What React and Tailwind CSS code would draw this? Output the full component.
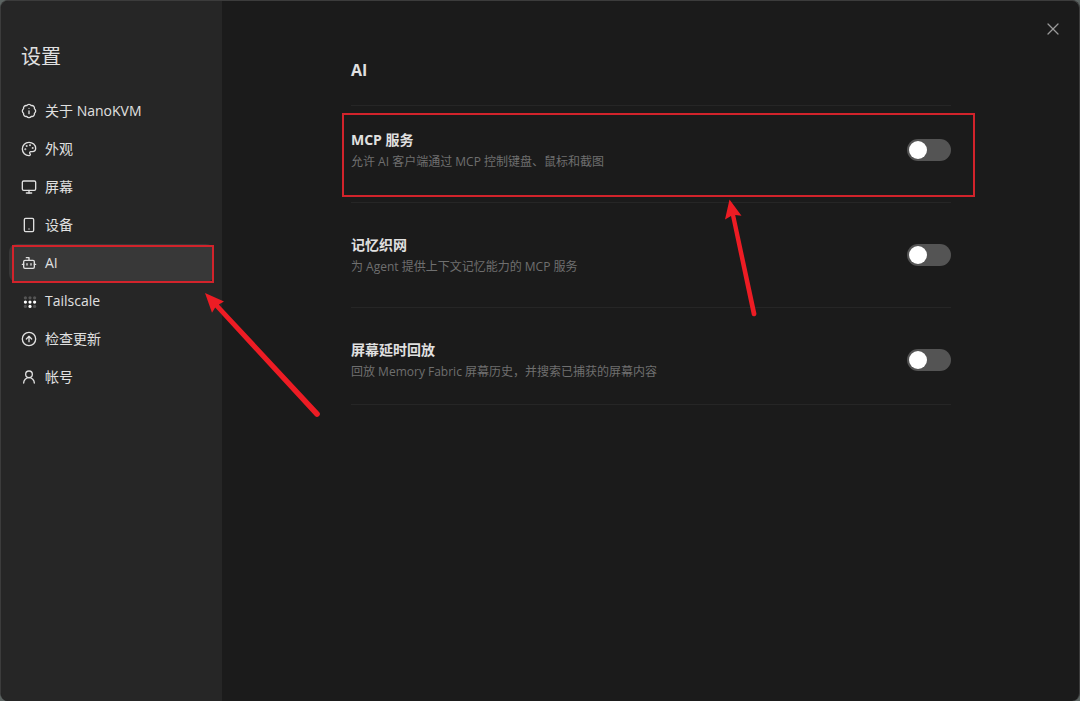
import React, { useState } from 'react';
import {
  BadgeInfo,
  Bot,
  CircleArrowUp,
  Monitor,
  Palette,
  Smartphone,
  UserRound,
  X,
} from 'lucide-react';

const TailscaleIcon = () => (
  <svg width="16" height="16" viewBox="0 0 16 16" fill="currentColor" aria-hidden="true">
    <g opacity="0.25">
      <circle cx="4.4" cy="4.8" r="1.6" />
      <circle cx="9" cy="4.8" r="1.6" />
      <circle cx="13.6" cy="4.8" r="1.6" />
      <circle cx="4.4" cy="13.4" r="1.6" />
      <circle cx="13.6" cy="13.4" r="1.6" />
    </g>
    <g fill="#fff">
      <circle cx="4.4" cy="9.1" r="1.6" />
      <circle cx="9" cy="9.1" r="1.6" />
      <circle cx="13.6" cy="9.1" r="1.6" />
      <circle cx="9" cy="13.4" r="1.6" />
    </g>
  </svg>
);

const tabs = [
  { id: 'about', label: '关于 NanoKVM', icon: <BadgeInfo size={16} /> },
  { id: 'appearance', label: '外观', icon: <Palette size={16} /> },
  { id: 'screen', label: '屏幕', icon: <Monitor size={16} /> },
  { id: 'device', label: '设备', icon: <Smartphone size={16} /> },
  { id: 'ai', label: 'AI', icon: <Bot size={16} />, marked: true },
  { id: 'tailscale', label: 'Tailscale', icon: <TailscaleIcon /> },
  { id: 'update', label: '检查更新', icon: <CircleArrowUp size={16} /> },
  { id: 'account', label: '帐号', icon: <UserRound size={16} /> },
];

const options = [
  {
    id: 'mcp',
    title: 'MCP 服务',
    description: '允许 AI 客户端通过 MCP 控制键盘、鼠标和截图',
    marked: true,
  },
  {
    id: 'memory',
    title: '记忆织网',
    description: '为 Agent 提供上下文记忆能力的 MCP 服务',
  },
  {
    id: 'replay',
    title: '屏幕延时回放',
    description: '回放 Memory Fabric 屏幕历史，并搜索已捕获的屏幕内容',
  },
];

// Red frame and arrow that point out the selected tab
const TabMark = () => (
  <>
    <span className="pointer-events-none absolute -bottom-px left-[3px] right-0 top-px border-2 border-[#d2232b]" />
    <svg
      className="pointer-events-none absolute left-[191px] top-11 z-10"
      width="124"
      height="132"
      viewBox="0 0 124 132"
      fill="#ed1c24"
      aria-hidden="true"
    >
      <path d="M5 5 L24 13.6 L18.8 16.4 L119 124 A2.8 2.8 0 0 1 115 128 L15.2 19.6 L12 24.7 Z" />
    </svg>
  </>
);

// Same for the MCP switch row
const OptionMark = () => (
  <>
    <span className="pointer-events-none absolute -left-[9px] -right-6 top-[7px] h-[84px] border-2 border-[#d2232b]" />
    <svg
      className="pointer-events-none absolute left-[369px] top-[89px] z-10"
      width="42"
      height="126"
      viewBox="0 0 42 126"
      fill="#ed1c24"
      aria-hidden="true"
    >
      <path d="M9.5 4.5 L21.5 20.7 L15.2 20 L36.4 118.6 A2.4 2.4 0 0 1 31.8 119.8 L11 21 L5 24.5 Z" />
    </svg>
  </>
);

const Sidebar = ({ current, onChange }) => (
  <aside className="w-[221px] shrink-0 bg-[#262626] px-2">
    <h1 className="px-3 pt-10 text-xl leading-8">设置</h1>
    <nav className="mt-[19px] flex flex-col">
      {tabs.map((tab) => (
        <button
          key={tab.id}
          type="button"
          onClick={() => onChange(tab.id)}
          className={`relative flex h-[38px] items-center gap-2 rounded-lg px-3 text-left text-sm ${
            current === tab.id ? 'bg-[#383838]' : ''
          }`}
        >
          {tab.icon}
          <span>{tab.label}</span>
          {tab.marked && <TabMark />}
        </button>
      ))}
    </nav>
  </aside>
);

const OptionRow = ({ option, checked, onToggle }) => (
  <div className="relative flex items-center justify-between border-b border-[#262626] py-[30px] first:pt-[22px] last:pb-[22px]">
    <label htmlFor={option.id} className="flex flex-col">
      <span className="text-sm leading-6 font-bold">{option.title}</span>
      <span className="text-xs leading-5 text-[#6f6f6f]">{option.description}</span>
    </label>
    <input
      id={option.id}
      type="checkbox"
      role="switch"
      checked={checked}
      onChange={onToggle}
      className="h-[22px] w-11 shrink-0 appearance-none rounded-full bg-[#545454] p-[2px] before:block before:size-[18px] before:rounded-full before:bg-white checked:bg-[#1668dc] checked:before:ml-auto"
    />
    {option.marked && <OptionMark />}
  </div>
);

const App = () => {
  const [current, setCurrent] = useState('ai');
  const [enabled, setEnabled] = useState({ mcp: false, memory: false, replay: false });

  const toggle = (id) => {
    setEnabled((prev) => ({ ...prev, [id]: !prev[id] }));
  };

  return (
    <div className="flex min-h-screen bg-[#5c6462] font-['Open_Sans','Noto_Sans_CJK_SC',sans-serif] text-[#e0e0e0]">
      <div className="relative flex grow overflow-hidden rounded-lg border border-b-0 border-[#3c3c3c] bg-[#1b1b1b]">
        <Sidebar current={current} onChange={setCurrent} />

        <main className="grow pl-[129px] pr-32 pt-[57px]">
          <h2 className="border-b border-[#262626] pb-[23px] text-base font-bold">AI</h2>
          <div>
            {options.map((option) => (
              <OptionRow
                key={option.id}
                option={option}
                checked={enabled[option.id]}
                onToggle={() => toggle(option.id)}
              />
            ))}
          </div>
        </main>

        <button
          type="button"
          aria-label="关闭"
          className="absolute right-[15px] top-[17px] flex size-[22px] items-center justify-center text-[#9a9a9a]"
        >
          <X size={20} strokeWidth={1.5} />
        </button>
      </div>
    </div>
  );
};

export default App;
